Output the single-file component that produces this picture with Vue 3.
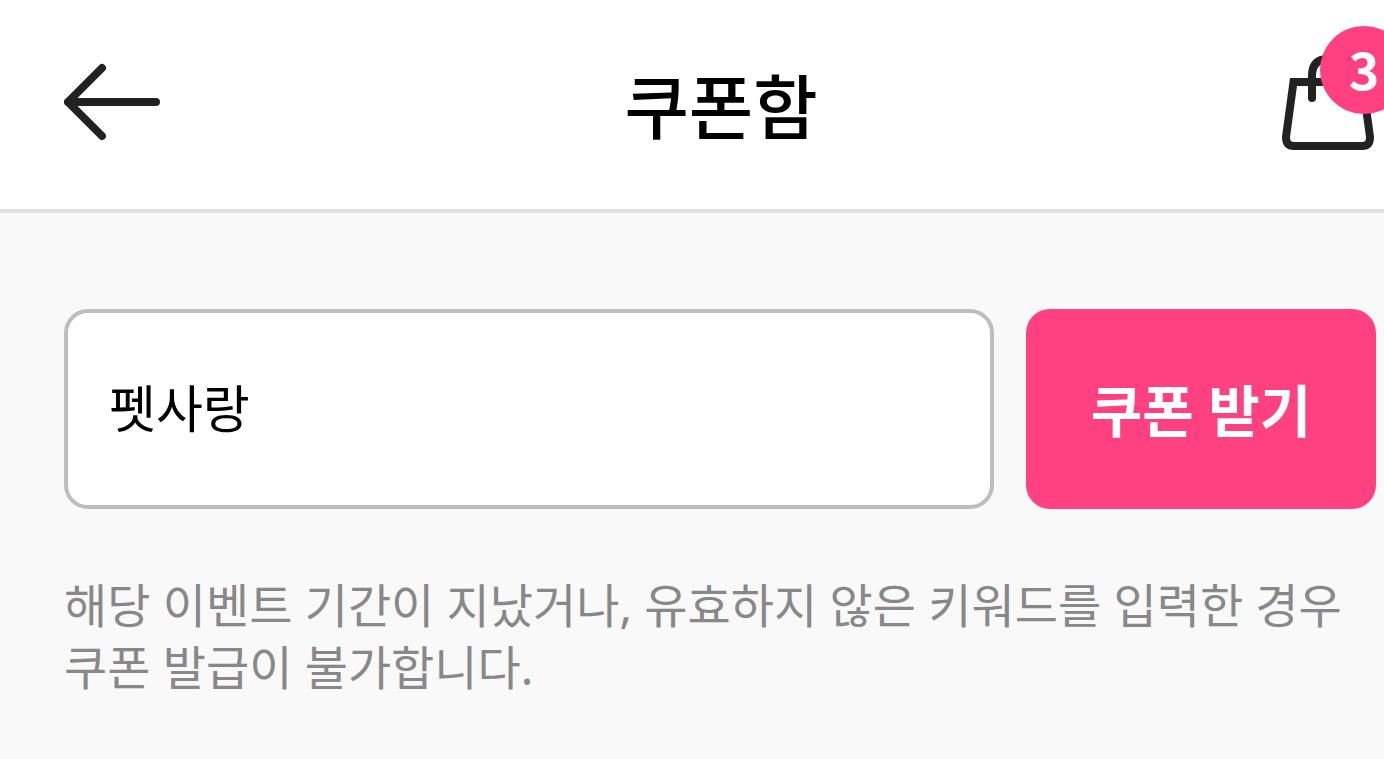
<script setup>
import { ref } from 'vue'
const keyword = ref('펫사랑')
</script>

<template>
  <div class="page">
    <header class="bar">
      <button class="icon-btn" type="button" aria-label="뒤로">
        <svg width="96" height="80" viewBox="0 0 96 80" fill="none" stroke="#222" stroke-width="8" stroke-linecap="round" stroke-linejoin="round">
          <path d="M38 6 4 40l34 34M4 40h88" />
          <path d="M4 40l8-4v8z" fill="#222" stroke="none" />
        </svg>
      </button>
      <h1>쿠폰함</h1>
      <button class="icon-btn bag" type="button" aria-label="장바구니">
        <svg width="92" height="96" viewBox="0 0 92 96" fill="none" stroke="#222" stroke-width="8" stroke-linecap="round">
          <path d="M11.500 28h69L88 83q0 9-8 9H12q-8 0-8-9z" />
          <path d="M30 44V22q0-17 16-17t16 17v22" />
        </svg>
        <span class="badge">3</span>
      </button>
    </header>
    <main>
      <form class="row" @submit.prevent>
        <input v-model="keyword" type="text" aria-label="쿠폰 키워드" />
        <button class="submit" type="submit">쿠폰 받기</button>
      </form>
      <p>해당 이벤트 기간이 지났거나, 유효하지 않은 키워드를 입력한 경우 쿠폰 발급이 불가합니다.</p>
    </main>
  </div>
</template>

<style>
body {
  margin: 0;
  background: #f9f9f9;
}
</style>

<style scoped>
.page {
  min-height: 100vh;
  overflow: hidden;
  font-family: "Noto Sans", "Noto Sans CJK KR", sans-serif;
  background: #f9f9f9;
}
.bar {
  display: grid;
  grid-template-columns: 96px 1fr 92px;
  align-items: center;
  min-height: 203px;
  padding: 0 10px 6px 64px;
  background: #fff;
  border-bottom: 4px solid #e0e0e0;
}
h1 {
  margin: 0;
  padding-top: 10px;
  text-align: center;
  font-size: 70px;
  font-weight: 500;
  line-height: 100px;
}
button {
  padding: 0;
  border: 0;
  font-family: inherit;
}
.icon-btn {
  background: none;
}
.icon-btn svg {
  display: block;
}
.bag {
  position: relative;
}
.badge {
  position: absolute;
  top: -28px;
  left: 38px;
  width: 88px;
  height: 88px;
  border-radius: 50%;
  background: #ff4081;
  color: #fff;
  font-family: "Noto Sans CJK KR", sans-serif;
  font-size: 52px;
  font-weight: 700;
  line-height: 84px;
  text-align: center;
}
main {
  padding: 96px 8px 60px 64px;
}
.row {
  display: flex;
  gap: 32px;
}
input {
  flex: 1;
  min-width: 0;
  height: 200px;
  box-sizing: border-box;
  padding: 0 41px 6px;
  border: 4px solid #bdbdbd;
  border-radius: 24px;
  outline: 0;
  background: #fff;
  color: #000;
  font-family: inherit;
  font-size: 51px;
}
.submit {
  width: 350px;
  padding-bottom: 4px;
  border-radius: 24px;
  background: #ff4081;
  color: #fff;
  font-size: 56px;
  font-weight: 700;
}
p {
  margin: 65px 0 0;
  color: #888;
  font-size: 47px;
  line-height: 62px;
}
</style>
